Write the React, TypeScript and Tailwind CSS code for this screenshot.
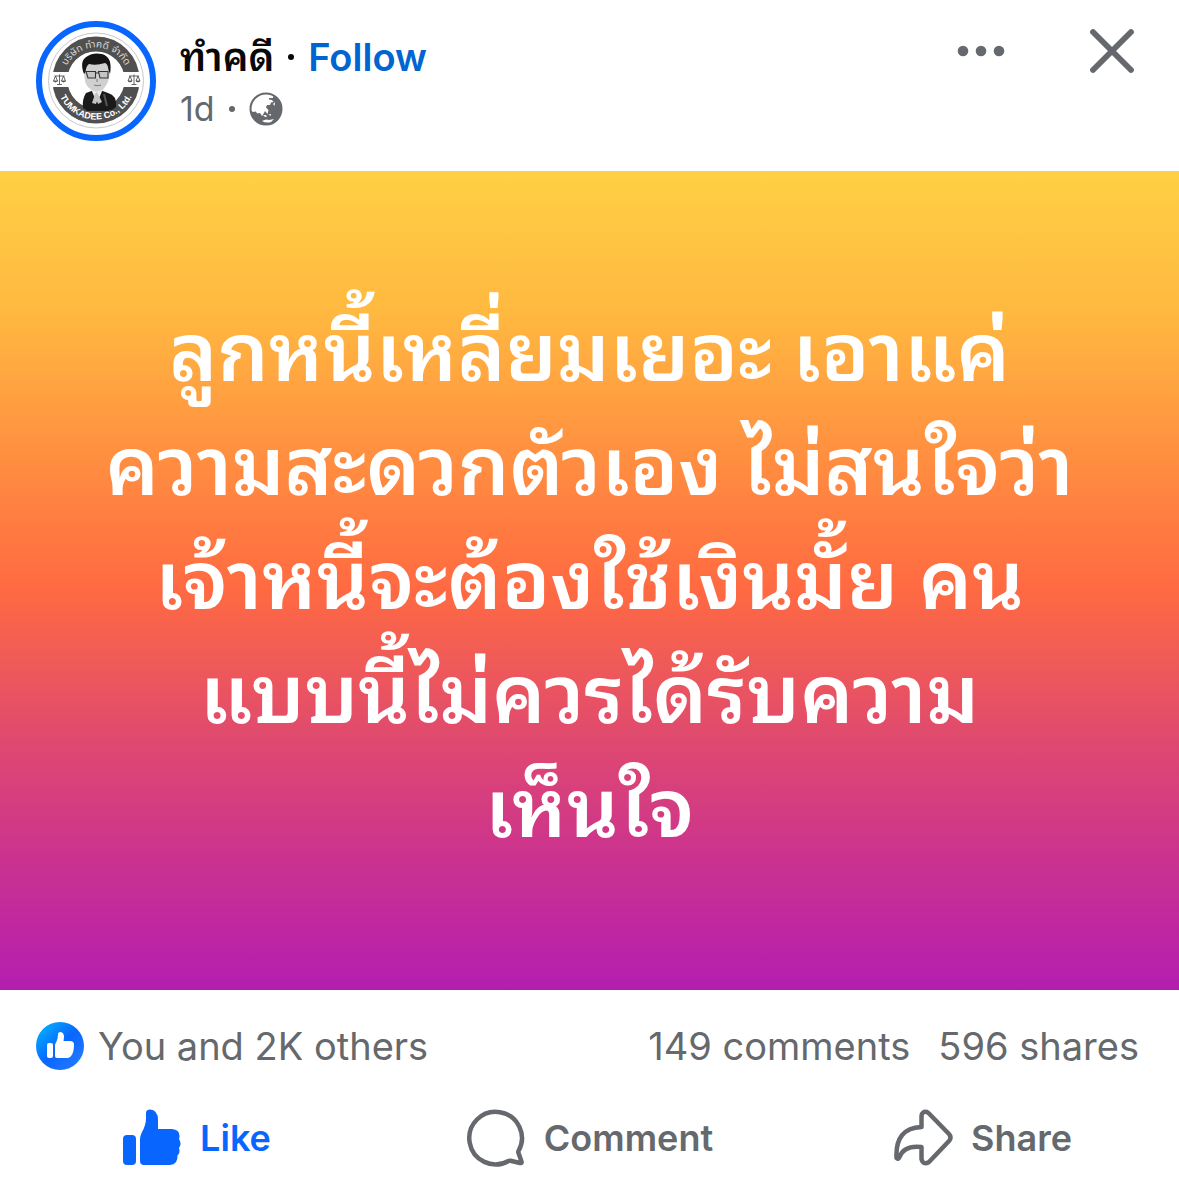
import React from "react";

const lines = [
  "ลูกหนี้เหลี่ยมเยอะ เอาแค่",
  "ความสะดวกตัวเอง ไม่สนใจว่า",
  "เจ้าหนี้จะต้องใช้เงินมั้ย คน",
  "แบบนี้ไม่ควรได้รับความ",
  "เห็นใจ",
];

function Scales({ x }: { x: number }) {
  return (
    <g transform={`translate(${x} 59)`} fill="none" stroke="#555" strokeWidth="0.9">
      <path d="M-5 -4 L5 -4 M0 -5.5 V4.5 M-2.5 4.5 H2.5" />
      <path d="M-4 -4 L-6 1 H-2 Z M4 -4 L2 1 H6 Z" />
      <path d="M-6 1 Q-4 3 -2 1 M2 1 Q4 3 6 1" fill="#555" />
    </g>
  );
}

function Avatar() {
  return (
    <svg viewBox="0 0 120 120" className="size-30 shrink-0" role="img" aria-label="TUMKADEE Co., Ltd.">
      <circle cx="60" cy="60" r="57" fill="#fff" stroke="#0866ff" strokeWidth="6" />
      <circle cx="60" cy="59.5" r="47.5" fill="none" stroke="#c9c9c9" strokeWidth="1" />
      <circle cx="60" cy="59" r="36" fill="none" stroke="#505050" strokeWidth="15" />
      <rect x="14" y="51" width="92" height="15" fill="#fff" />
      <Scales x={23.5} />
      <Scales x={98} />
      <path d="M50 89 L47 87 Q46 78 50 72 L61 68 L72 72 Q81 74 80 86 L76 89 H73 V90 H51 Z" fill="#1a1a1a" />
      <path d="M55 68 L61 82 L67 68 L61 65 Z" fill="#ececec" />
      <path d="M56 82 L59 73 L61 71 L66 81 L62 83 L61 79 L60 83 Z" fill="#c4c4c4" />
      <path d="M68 73 L71 85" stroke="#555" strokeWidth="2" />
      <path d="M49 48 Q47 50 48.500 56 Q49 66 56 69 Q61 72 67 68.500 Q73 62 73.500 54 V44 L69 40 H52 Z" fill="#d0d0d0" />
      <path d="M48 53 Q43 40 51 35.500 Q57 31 66 33 Q77 36 74 53 L72.500 49 Q72 43 69 42 Q60 45 53 43 Q50 45 49.500 51 Z" fill="#141414" />
      <path d="M50 50.500 H59.500 V57 H52 Z M62.500 50.500 H72 V57 H64 Z M59.500 52 H62.500" fill="#c4c4c4" stroke="#333" strokeWidth="1.100" />
      <path d="M58 64 Q61 65.500 65 64 M61 58 V61" stroke="#777" strokeWidth="1" fill="none" />
      <path id="avatar-top" d="M27.500 59 A32.500 32.500 0 0 1 92.500 59" fill="none" />
      <path id="avatar-bottom" d="M20.500 59 A39.500 39.500 0 0 0 99.500 59" fill="none" />
      <text fill="#d8d8d8" fontSize="10" textAnchor="middle" className="font-['Noto_Sans_Thai','Noto_Sans',sans-serif]">
        <textPath href="#avatar-top" startOffset="50%">บริษัท ทำคดี จำกัด</textPath>
      </text>
      <text fill="#fff" fontSize="9" fontWeight="700" textAnchor="middle" className="font-['Liberation_Sans',sans-serif]">
        <textPath href="#avatar-bottom" startOffset="50%">TUMKADEE Co., Ltd.</textPath>
      </text>
    </svg>
  );
}

function Globe() {
  return (
    <svg viewBox="0 0 34 34" className="size-[34px]" role="img" aria-label="Public">
      <circle cx="17" cy="17" r="15.500" fill="#fff" stroke="#65686c" strokeWidth="2" />
      <path d="M24 4 L30 8 Q33.500 13 32.500 20 Q31 28 24 31.500 Q15 34.500 8 30 Q3 26 1.500 18.500 L4 20 L7 19.500 L8 21.500 L11 21 L13 24 L15 21 L16 19 L18.500 22 L19.500 18 L17 15.500 L18 13 L21 13 L22 10.500 L24.500 10 L23 8 L20 7.500 L20 6 L24 6 Z" fill="#65686c" />
      <path d="M14 23 L16 25 L18 24.500 L17 23 Z M19.500 22.500 L22 22 L21.500 24 Z M24 12 L26 10 L25.500 14 Z" fill="#fff" />
      <path d="M13 29 Q17 26.500 20 28 L25 27 L22 30 Q17 31.500 13 29 Z" fill="#fff" />
    </svg>
  );
}

export default function App() {
  return (
    <article className="w-full bg-white font-[Inter,'Noto_Sans_Thai_Looped',Loma,'Noto_Sans_Thai','Noto_Sans',sans-serif] text-[#65686c]">
      <header className="flex items-start pt-[21px] pr-11 pb-[30px] pl-9">
        <Avatar />
        <div className="ml-6 flex-1 pt-3">
          <div className="flex h-12 items-center gap-[14px] text-[38px] leading-12 font-semibold">
            <a href="#profile" className="text-[39px] text-[#080809]">ทำคดี</a>
            <span className="size-[6px] rounded-full bg-[#080809]" />
            <button type="button" className="text-[#0064d1]">Follow</button>
          </div>
          <div className="mt-1 flex h-12 items-center gap-[14px] text-[34px] leading-12">
            <span>1d</span>
            <span className="size-[6px] rounded-full bg-[#65686c]" />
            <Globe />
          </div>
        </div>
        <button type="button" aria-label="More options" className="pt-6">
          <svg viewBox="0 0 48 12" className="h-3 w-12" fill="#65686c">
            <circle cx="6" cy="6" r="5.300" />
            <circle cx="24" cy="6" r="5.300" />
            <circle cx="42" cy="6" r="5.300" />
          </svg>
        </button>
        <button type="button" aria-label="Close" className="ml-21 pt-[7px]">
          <svg viewBox="0 0 46 46" className="size-[46px]" stroke="#65686c" strokeWidth="5.800" strokeLinecap="round">
            <path d="M4 4 L42 42 M42 4 L4 42" />
          </svg>
        </button>
      </header>

      <section className="bg-[linear-gradient(180deg,#ffd044_0%,#ffb940_17%,#ff9140_34%,#ff6a42_51%,#e04a6e_69%,#cb328f_84%,#b41eb0_100%)] px-12 pt-[124px] pb-[125px] text-center text-[81px] leading-[114px] font-semibold text-white">
        <p>
          {lines.map((line) => (
            <span key={line} className="block whitespace-nowrap">{line}</span>
          ))}
        </p>
      </section>

      <div className="flex items-center justify-between px-9 pt-8 text-[38px] leading-12">
        <a href="#reactions" className="flex items-center gap-[14px]">
          <svg viewBox="0 0 48 48" className="size-12">
            <defs>
              <linearGradient id="like-badge" x1="0" y1="0" x2="1" y2="1">
                <stop offset="0.100" stopColor="#02adfc" />
                <stop offset="0.500" stopColor="#0866ff" />
                <stop offset="1" stopColor="#2b7eff" />
              </linearGradient>
            </defs>
            <circle cx="24" cy="24" r="24" fill="url(#like-badge)" />
            <rect x="11" y="21" width="6" height="15" rx="2" fill="#fff" />
            <path d="M19 24 Q19 21.500 20.500 19.500 Q22 17 22 12 Q22 10 24.500 10 Q28 10.500 28 15 L27.500 19 H34 Q37.500 19 38 22 Q38 35.500 31 36 H21 Q19 36 19 34 Z" fill="#fff" />
          </svg>
          <span>You and 2K others</span>
        </a>
        <div className="flex gap-7 pr-1">
          <a href="#comments">149 comments</a>
          <a href="#shares">596 shares</a>
        </div>
      </div>

      <div className="grid grid-cols-3 pt-[38px] pb-2 text-[36px] leading-[60px] font-semibold">
        <button type="button" className="flex items-center justify-center gap-[18px] text-[#0866ff]">
          <svg viewBox="0 0 60 60" className="size-15" fill="currentColor">
            <rect x="1" y="27" width="13" height="30" rx="4" />
            <path d="M18 31 Q18 28 20 24 Q24 17 24 10 V5 Q24 1.500 28 1.500 Q36 2 36 12 V21 H50 Q57.500 21.500 57.500 28 Q57.500 30 57 31 Q60 35.500 57 40 Q58.500 44.500 55.500 47.500 Q56 56.500 48 57 H22 Q18 57 18 53 Z" />
          </svg>
          Like
        </button>
        <button type="button" className="flex items-center justify-center gap-[18px]">
          <svg viewBox="0 0 60 60" className="size-15" fill="none" stroke="currentColor" strokeWidth="4.500" strokeLinejoin="round">
            <path d="M52.500 43 A26.300 26.300 0 1 0 42.500 53 Q43.500 52.500 44.500 52.700 L54 55 Q56 55.500 55.500 53.500 L52.500 45 Q52 44 52.500 43 Z" />
          </svg>
          Comment
        </button>
        <button type="button" className="flex items-center justify-center gap-[18px]">
          <svg viewBox="0 0 60 60" className="size-15" fill="none" stroke="currentColor" strokeWidth="4.500" strokeLinejoin="round">
            <path d="M28.500 19 V8 Q29 3 34 4 L36 5.500 L56 26 Q59 29.500 56 33 L36 54 Q30 57.500 28.500 51 V39 Q11 37 6.500 49 Q5 52 3.500 50 Q2 20 28.500 19 Z" />
          </svg>
          Share
        </button>
      </div>
    </article>
  );
}
